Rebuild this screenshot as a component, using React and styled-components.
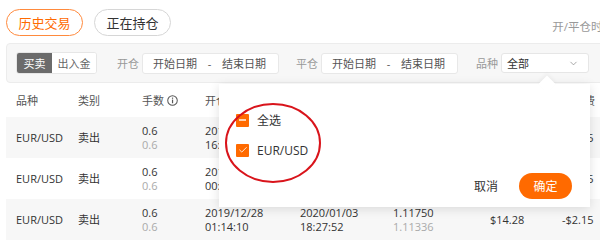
import React from "react";
import styled, { createGlobalStyle } from "styled-components";
import { ChevronDown, Check } from "lucide-react";

const GlobalStyle = createGlobalStyle`
  html, body {
    margin: 0;
    padding: 0;
    background: #fff;
  }
  body {
    font-family: "Open Sans", "Noto Sans CJK SC", sans-serif;
    color: #333;
  }
`;

const Page = styled.div`
  position: relative;
  width: 600px;
  height: 241px;
  overflow: hidden;
  padding: 9px 0 0 6px;
  box-sizing: border-box;
`;

const TopRow = styled.div`
  display: flex;
  align-items: center;
  gap: 11px;
  height: 27px;
`;

const Tab = styled.div`
  box-sizing: border-box;
  width: 77px;
  height: 27px;
  border-radius: 14px;
  border: 1px solid ${(p) => (p.active ? "#ff8a3d" : "#d6d6d6")};
  color: ${(p) => (p.active ? "#ff6a00" : "#333")};
  font-size: 13px;
  display: flex;
  align-items: center;
  justify-content: center;
`;

const TimeHint = styled.div`
  margin-left: auto;
  margin-right: -14px;
  padding-top: 6px;
  font-size: 11.5px;
  color: #999;
  white-space: nowrap;
`;

const FilterBar = styled.div`
  margin-top: 7px;
  width: 610px;
  height: 40px;
  box-sizing: border-box;
  background: #f7f7f7;
  border: 1px solid #ececec;
  border-radius: 4px;
  display: flex;
  align-items: center;
  padding-left: 9px;
`;

const Segment = styled.div`
  display: flex;
  height: 20px;
  border: 1px solid #e6e6e6;
  border-radius: 3px;
  overflow: hidden;
  background: #fff;
`;

const SegItem = styled.div`
  width: ${(p) => p.w}px;
  display: flex;
  align-items: center;
  justify-content: center;
  font-size: 11px;
  background: ${(p) => (p.active ? "#6b6b6b" : "#fff")};
  color: ${(p) => (p.active ? "#fff" : "#666")};
`;

const Label = styled.span`
  font-size: 11px;
  color: #999;
  margin: 0 3px 0 ${(p) => p.gap}px;
  white-space: nowrap;
`;

const DateBox = styled.div`
  box-sizing: border-box;
  width: 137px;
  height: 21px;
  background: #fff;
  border: 1px solid #e8e8e8;
  border-radius: 3px;
  display: flex;
  align-items: center;
  justify-content: space-between;
  padding: 0 12px 0 10px;
  font-size: 11px;
  color: #555;
`;

const Select = styled.div`
  box-sizing: border-box;
  width: 88px;
  height: 20px;
  background: #fff;
  border: 1px solid #e6e6e6;
  border-radius: 3px;
  display: flex;
  align-items: center;
  justify-content: space-between;
  padding: 0 9px 0 5px;
  font-size: 11px;
  color: #333;
`;

const Table = styled.div`
  width: 620px;
`;

const Grid = styled.div`
  display: grid;
  grid-template-columns: 10px 62px 64px 63px 95px 93px 97px 72px 60px;
  align-items: center;
  height: ${(p) => p.h}px;
  background: ${(p) => (p.shaded ? "#f7f7f7" : "#fff")};
  font-size: 11px;
`;

const HeadCell = styled.div`
  color: #555;
  display: flex;
  align-items: center;
  gap: 3px;
  white-space: nowrap;
`;

const Cell = styled.div`
  display: flex;
  flex-direction: column;
  line-height: 14px;
  white-space: nowrap;
  color: #333;
`;

const Sub = styled.span`
  color: #aaa;
`;

const Popup = styled.div`
  position: absolute;
  left: 219px;
  top: 84px;
  width: 371px;
  height: 123px;
  box-sizing: border-box;
  background: #fff;
  box-shadow: 0 2px 10px rgba(0, 0, 0, 0.12);
  padding: 29px 18px 14px 17px;
  display: flex;
  flex-direction: column;
`;

const Arrow = styled.div`
  position: absolute;
  top: -6px;
  left: 322px;
  width: 12px;
  height: 12px;
  background: #fff;
  transform: rotate(45deg);
  box-shadow: -2px -2px 4px rgba(0, 0, 0, 0.04);
`;

const Option = styled.div`
  display: flex;
  align-items: center;
  gap: 8px;
  height: 14px;
  margin-bottom: 16px;
  font-size: 12px;
  color: #333;
`;

const Box = styled.span`
  width: 13px;
  height: 13px;
  background: #ff6a00;
  border-radius: 1px;
  display: flex;
  align-items: center;
  justify-content: center;
`;

const Dash = styled.span`
  width: 7px;
  height: 1.5px;
  background: #ffd2b0;
`;

const Actions = styled.div`
  margin-top: auto;
  display: flex;
  align-items: center;
  justify-content: flex-end;
  gap: 21px;
`;

const TextBtn = styled.span`
  font-size: 12px;
  color: #333;
`;

const PrimaryBtn = styled.span`
  width: 53px;
  height: 26px;
  border-radius: 13px;
  background: #ff6a00;
  color: #fff;
  font-size: 12px;
  display: flex;
  align-items: center;
  justify-content: center;
`;

const Circle = styled.svg`
  position: absolute;
  left: 224px;
  top: 101px;
`;

const InfoIcon = () => (
  <svg width="11" height="11" viewBox="0 0 12 12">
    <circle cx="6" cy="6" r="5.2" fill="none" stroke="#555" strokeWidth="1.1" />
    <rect x="5.4" y="5" width="1.3" height="4" fill="#555" />
    <rect x="5.4" y="2.8" width="1.3" height="1.3" fill="#555" />
  </svg>
);

const rows = [
  ["2019/12/30", "16:02:41", "2019/12/31", "09:12:05", "1.11960", "1.12002", "-$1.25", "-$0.35"],
  ["2019/12/30", "00:31:18", "2020/01/02", "10:45:33", "1.11880", "1.11712", "$10.08", "-$1.45"],
  ["2019/12/28", "01:14:10", "2020/01/03", "18:27:52", "1.11750", "1.11336", "$14.28", "-$2.15"],
];

export default function App() {
  return (
    <>
      <GlobalStyle />
      <Page>
        <TopRow>
          <Tab active>历史交易</Tab>
          <Tab>正在持仓</Tab>
          <TimeHint>开/平仓时间</TimeHint>
        </TopRow>

        <FilterBar>
          <Segment>
            <SegItem w={35} active>买卖</SegItem>
            <SegItem w={44}>出入金</SegItem>
          </Segment>
          <Label gap={20}>开仓</Label>
          <DateBox>
            <span>开始日期</span>
            <span>-</span>
            <span>结束日期</span>
          </DateBox>
          <Label gap={17}>平仓</Label>
          <DateBox>
            <span>开始日期</span>
            <span>-</span>
            <span>结束日期</span>
          </DateBox>
          <Label gap={18}>品种</Label>
          <Select>
            <span>全部</span>
            <ChevronDown size={11} color="#888" strokeWidth={1.6} />
          </Select>
        </FilterBar>

        <Table>
          <Grid h={34}>
            <span />
            <HeadCell>品种</HeadCell>
            <HeadCell>类别</HeadCell>
            <HeadCell>
              手数 <InfoIcon />
            </HeadCell>
            <HeadCell>开仓时间</HeadCell>
            <HeadCell>平仓时间</HeadCell>
            <HeadCell>开/平仓价</HeadCell>
            <HeadCell>盈亏</HeadCell>
            <HeadCell>库存费</HeadCell>
          </Grid>
          {rows.map((r, i) => (
            <Grid key={i} h={41} shaded={i % 2 === 0}>
              <span />
              <Cell>EUR/USD</Cell>
              <Cell>卖出</Cell>
              <Cell>
                <span>0.6</span>
                <Sub>0.6</Sub>
              </Cell>
              <Cell>
                <span>{r[0]}</span>
                <span>{r[1]}</span>
              </Cell>
              <Cell>
                <span>{r[2]}</span>
                <span>{r[3]}</span>
              </Cell>
              <Cell>
                <span>{r[4]}</span>
                <Sub>{r[5]}</Sub>
              </Cell>
              <Cell>{r[6]}</Cell>
              <Cell>{r[7]}</Cell>
            </Grid>
          ))}
        </Table>

        <Popup>
          <Arrow />
          <Option>
            <Box>
              <Dash />
            </Box>
            全选
          </Option>
          <Option>
            <Box>
              <Check size={10} color="#fff" strokeWidth={2} />
            </Box>
            EUR/USD
          </Option>
          <Actions>
            <TextBtn>取消</TextBtn>
            <PrimaryBtn>确定</PrimaryBtn>
          </Actions>
        </Popup>

        <Circle width="100" height="84" viewBox="0 0 100 84">
          <ellipse cx="49" cy="42" rx="47" ry="39" fill="none" stroke="#d9141b" strokeWidth="2" />
        </Circle>
      </Page>
    </>
  );
}
